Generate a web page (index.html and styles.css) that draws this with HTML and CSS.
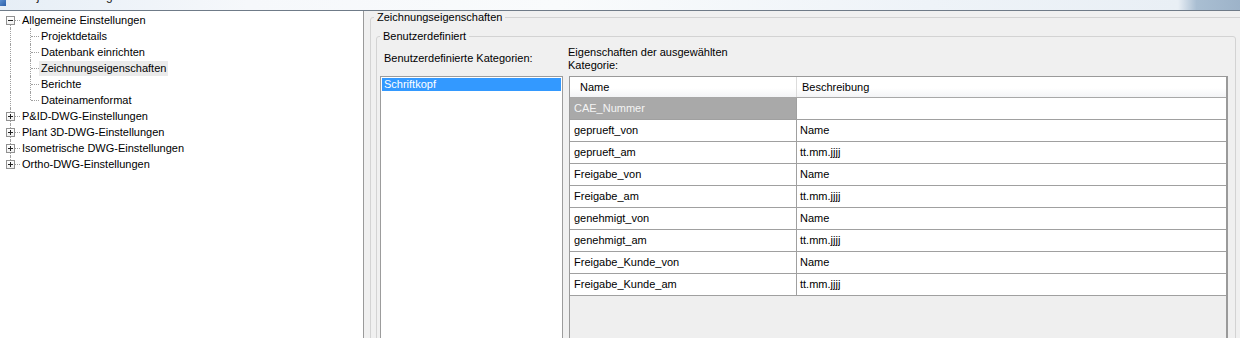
FILE: index.html
```html
<!DOCTYPE html>
<html lang="de">
<head>
<meta charset="utf-8">
<title>Projekteinstellungen</title>
<link rel="stylesheet" href="styles.css">
</head>
<body>
<div class="window">
  <div class="titlebar">
    <span class="app-icon"></span>
    <span class="title">Projekteinstellungen</span>
  </div>
  <div class="main">
    <nav class="tree">
      <div class="node root first"><span class="twig"><span class="exp minus"></span></span><span class="label">Allgemeine Einstellungen</span></div>
      <div class="node child first-child"><span class="rail"></span><span class="twig"></span><span class="label">Projektdetails</span></div>
      <div class="node child"><span class="rail"></span><span class="twig"></span><span class="label">Datenbank einrichten</span></div>
      <div class="node child"><span class="rail"></span><span class="twig"></span><span class="label selected">Zeichnungseigenschaften</span></div>
      <div class="node child"><span class="rail"></span><span class="twig"></span><span class="label">Berichte</span></div>
      <div class="node child last-child"><span class="rail"></span><span class="twig"></span><span class="label">Dateinamenformat</span></div>
      <div class="node root"><span class="twig"><span class="exp plus"></span></span><span class="label">P&amp;ID-DWG-Einstellungen</span></div>
      <div class="node root"><span class="twig"><span class="exp plus"></span></span><span class="label">Plant 3D-DWG-Einstellungen</span></div>
      <div class="node root"><span class="twig"><span class="exp plus"></span></span><span class="label">Isometrische DWG-Einstellungen</span></div>
      <div class="node root last"><span class="twig"><span class="exp plus"></span></span><span class="label">Ortho-DWG-Einstellungen</span></div>
    </nav>
    <section class="pane">
      <fieldset class="group outer">
        <legend>Zeichnungseigenschaften</legend>
        <fieldset class="group inner">
          <legend>Benutzerdefiniert</legend>
          <div class="cols">
            <div class="lbl lbl-left">Benutzerdefinierte Kategorien:</div>
            <div class="lbl lbl-right">Eigenschaften der ausgewählten<br>Kategorie:</div>
            <div class="listbox">
              <div class="item selected">Schriftkopf</div>
            </div>
            <div class="grid">
              <div class="grow head"><div class="c1">Name</div><div class="c2">Beschreibung</div></div>
              <div class="grow active"><div class="c1">CAE_Nummer</div><div class="c2"></div></div>
              <div class="grow"><div class="c1">geprueft_von</div><div class="c2">Name</div></div>
              <div class="grow"><div class="c1">geprueft_am</div><div class="c2">tt.mm.jjjj</div></div>
              <div class="grow"><div class="c1">Freigabe_von</div><div class="c2">Name</div></div>
              <div class="grow"><div class="c1">Freigabe_am</div><div class="c2">tt.mm.jjjj</div></div>
              <div class="grow"><div class="c1">genehmigt_von</div><div class="c2">Name</div></div>
              <div class="grow"><div class="c1">genehmigt_am</div><div class="c2">tt.mm.jjjj</div></div>
              <div class="grow"><div class="c1">Freigabe_Kunde_von</div><div class="c2">Name</div></div>
              <div class="grow"><div class="c1">Freigabe_Kunde_am</div><div class="c2">tt.mm.jjjj</div></div>
            </div>
          </div>
        </fieldset>
      </fieldset>
    </section>
  </div>
</div>
</body>
</html>
```

FILE: styles.css
```css
* { box-sizing: border-box; }

html, body {
  margin: 0;
  padding: 0;
  width: 1240px;
  height: 338px;
  overflow: hidden;
  background: #f0f0f0;
  font-family: "Liberation Sans", Arial, sans-serif;
  font-size: 11px;
  color: #000;
}

.window {
  width: 1240px;
  height: 338px;
  display: flex;
  flex-direction: column;
}

/* ---------- title bar (cut off at the top) ---------- */
.titlebar {
  height: 11px;
  flex: none;
  display: flex;
  align-items: flex-start;
  overflow: hidden;
  border-bottom: 1px solid #6f7b88;
  background: linear-gradient(90deg, #e6eef6 0%, #f6f8fb 20%, #f9fbfc 45%, #eef3f8 75%, #e9eff5 95%, #a9bed2 96.5%, #9db3c9 100%);
}

.app-icon {
  width: 6px;
  height: 6px;
  flex: none;
  background: linear-gradient(135deg, #5b8fd0, #2c5fa8);
}

.title {
  display: block;
  margin: -10px 0 0 12px;
  font-size: 12px;
  line-height: 12px;
  color: #1a1a1a;
}

/* ---------- main ---------- */
.main {
  flex: 1;
  display: flex;
  min-height: 0;
}

/* ---------- tree ---------- */
.tree {
  width: 364px;
  flex: none;
  background: #fff;
  border-right: 1px solid #9a9a9a;
  padding-top: 1px;
}

.node {
  display: flex;
  align-items: center;
  height: 16px;
}

.twig, .rail {
  position: relative;
  height: 16px;
  flex: none;
}

.root .twig { width: 20px; }
.child .rail { width: 20px; }
.child .twig { width: 19px; }

.twig::before, .rail::before {
  content: "";
  position: absolute;
  left: 10px;
  top: 0;
  bottom: 0;
  border-left: 1px dotted #a0a0a0;
}

.twig::after {
  content: "";
  position: absolute;
  left: 11px;
  right: 0;
  top: 8px;
  border-top: 1px dotted #a0a0a0;
}

.root.first .twig::before { top: 8px; }
.root.last .twig::before { bottom: 8px; }
.child.last-child .twig::before { bottom: 8px; }

.exp {
  position: absolute;
  left: 6px;
  top: 4px;
  width: 9px;
  height: 9px;
  border: 1px solid #919191;
  background: linear-gradient(#ffffff, #f0f0f0);
  z-index: 1;
}

.exp::before {
  content: "";
  position: absolute;
  left: 1px;
  top: 3px;
  width: 5px;
  height: 1px;
  background: #222;
}

.exp.plus::after {
  content: "";
  position: absolute;
  left: 3px;
  top: 1px;
  width: 1px;
  height: 5px;
  background: #222;
}

.label {
  height: 15px;
  line-height: 15px;
  padding: 0 2px;
  white-space: nowrap;
}

.label.selected {
  background: #ebebeb;
}

/* ---------- right pane ---------- */
.pane {
  flex: 1;
  min-width: 0;
  overflow: hidden;
  padding-left: 6px;
}

.group {
  margin: 0;
  border: 1px solid #d3d3d3;
  border-radius: 3px;
  min-width: 0;
}

.group legend {
  padding: 0 3px;
  line-height: 13px;
  font-size: 11px;
}

.outer {
  margin-right: -8px;
  padding: 6px 3px 0 3px;
  height: 360px;
}

.inner {
  margin: 0 8px 0 2px;
  padding: 3px 7px 0 3px;
  height: 340px;
}

.cols {
  display: grid;
  grid-template-columns: 183px 1fr;
  grid-template-rows: 26px auto;
  column-gap: 5px;
  row-gap: 4px;
}

.lbl {
  line-height: 13px;
  white-space: nowrap;
}

.lbl-left {
  padding: 6px 0 0 4px;
}

.listbox {
  height: 300px;
  background: #fff;
  border: 1px solid #9c9c9c;
  padding: 1px;
}

.item {
  height: 13px;
  line-height: 13px;
  padding-left: 2px;
}

.item.selected {
  background: #3399ff;
  color: #fff;
}

/* ---------- property grid ---------- */
.grid {
  margin-left: 1px;
  height: 300px;
  background: #efefef;
  border: 1px solid #9a9a9a;
  border-right-width: 2px;
}

.grow {
  display: grid;
  grid-template-columns: 227px 1fr;
  height: 22px;
  background: #fff;
  border-bottom: 1px solid #a0a0a0;
}

.grow > div {
  line-height: 21px;
  white-space: nowrap;
  overflow: hidden;
}

.grow .c1 {
  border-right: 1px solid #a0a0a0;
  padding-left: 4px;
}

.grow .c2 {
  padding-left: 3px;
}

.grow.head {
  height: 21px;
  background: linear-gradient(#ffffff 0%, #ffffff 55%, #f3f4f6 100%);
  border-bottom: 1px solid #a8a8a8;
}

.grow.head > div {
  line-height: 20px;
}

.grow.head .c1 {
  padding-left: 10px;
  border-right-color: #dcdcdc;
}

.grow.head .c2 {
  padding-left: 5px;
}

.grow.active .c1 {
  background: #a9a9a9;
  color: #f4f4f4;
}
```
